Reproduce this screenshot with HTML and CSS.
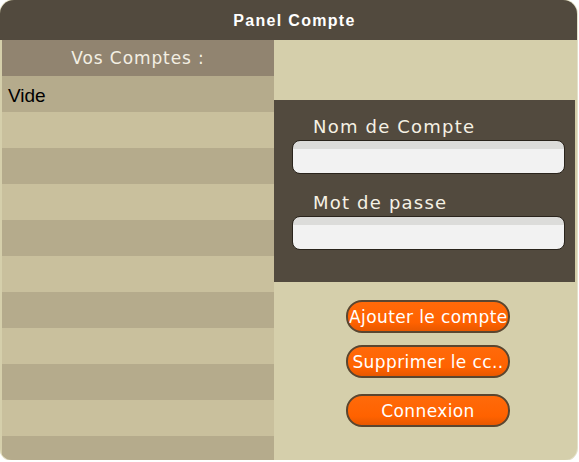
FILE: index.html
```html
<!DOCTYPE html>
<html lang="fr">
<head>
    <meta charset="UTF-8">
    <title>Panel Compte</title>
    <link rel="stylesheet" href="styles.css">
</head>
<body>
    <div class="window">
        <div class="title-bar">Panel Compte</div>
        <div class="content">
            <div class="accounts">
                <div class="accounts-head">Vos Comptes :</div>
                <div class="row dark">Vide</div>
                <div class="row"></div>
                <div class="row dark"></div>
                <div class="row"></div>
                <div class="row dark"></div>
                <div class="row"></div>
                <div class="row dark"></div>
                <div class="row"></div>
                <div class="row dark"></div>
                <div class="row"></div>
                <div class="row dark"></div>
            </div>
            <div class="side">
                <div class="login-box">
                    <div class="field-label">Nom de Compte</div>
                    <div class="field"></div>
                    <div class="field-label">Mot de passe</div>
                    <div class="field"></div>
                </div>
                <div class="actions">
                    <button class="btn left">Ajouter le compte</button>
                    <button class="btn">Supprimer le cc..</button>
                    <button class="btn connect">Connexion</button>
                </div>
            </div>
        </div>
    </div>
</body>
</html>
```

FILE: styles.css
```css
body {
    margin: 0;
    background-color: #ffffff;
    font-family: 'DejaVu Sans', sans-serif;
}
.window {
    width: 577px;
    height: 460px;
    background-color: #d5cfab;
    border-radius: 14px 14px 12px 12px;
    overflow: hidden;
    box-shadow: 0 0 0 1px #e4e0c8;
    display: flex;
    flex-direction: column;
}
.title-bar {
    height: 40px;
    background-color: #524a3e;
    color: #ffffff;
    font-family: 'Liberation Sans', Arial, sans-serif;
    font-weight: bold;
    font-size: 16px;
    letter-spacing: 1.3px;
    line-height: 42px;
    text-align: center;
    padding-left: 12px;
    flex-shrink: 0;
}
.content {
    flex: 1;
    display: flex;
    min-height: 0;
}
.accounts {
    width: 272px;
    margin-left: 2px;
    display: flex;
    flex-direction: column;
    overflow: hidden;
}
.accounts-head {
    height: 36px;
    background-color: #918470;
    color: #f3efe3;
    font-size: 17px;
    letter-spacing: 0.9px;
    line-height: 36px;
    text-align: center;
    flex-shrink: 0;
}
.row {
    height: 36px;
    flex-shrink: 0;
    background-color: #c9c09d;
    color: #000000;
    font-family: 'Liberation Sans', Arial, sans-serif;
    font-size: 19px;
    line-height: 40px;
    padding-left: 6px;
}
.row.dark {
    background-color: #b5ab8c;
}
.side {
    flex: 1;
    display: flex;
    flex-direction: column;
}
.login-box {
    margin-top: 60px;
    margin-right: 2px;
    height: 182px;
    box-sizing: border-box;
    background-color: #524a3e;
    padding: 13px 10px 0 18px;
}
.field-label {
    color: #f5f1e4;
    font-size: 18px;
    letter-spacing: 1.2px;
    line-height: 27px;
    padding-left: 21px;
}
.field {
    height: 34px;
    box-sizing: border-box;
    border: 1px solid #2a241c;
    border-radius: 8px;
    background: linear-gradient(#dcdcda 0, #dcdcda 8px, #f2f2f2 8px);
    margin-bottom: 15px;
}
.actions {
    display: flex;
    flex-direction: column;
    align-items: flex-start;
    padding-left: 72px;
    padding-top: 18px;
}
.btn {
    width: 164px;
    height: 33px;
    box-sizing: border-box;
    border: 2px solid #5a4630;
    border-radius: 16px;
    background: linear-gradient(#ff6a0a, #ff6200 70%, #e85800);
    color: #ffffff;
    font-family: 'DejaVu Sans', sans-serif;
    font-size: 17px;
    letter-spacing: 0.4px;
    padding: 0;
    margin-bottom: 12px;
    white-space: nowrap;
    overflow: hidden;
}
.btn.left {
    text-align: left;
    padding-left: 1px;
}
.btn.connect {
    margin-top: 4px;
}
```
